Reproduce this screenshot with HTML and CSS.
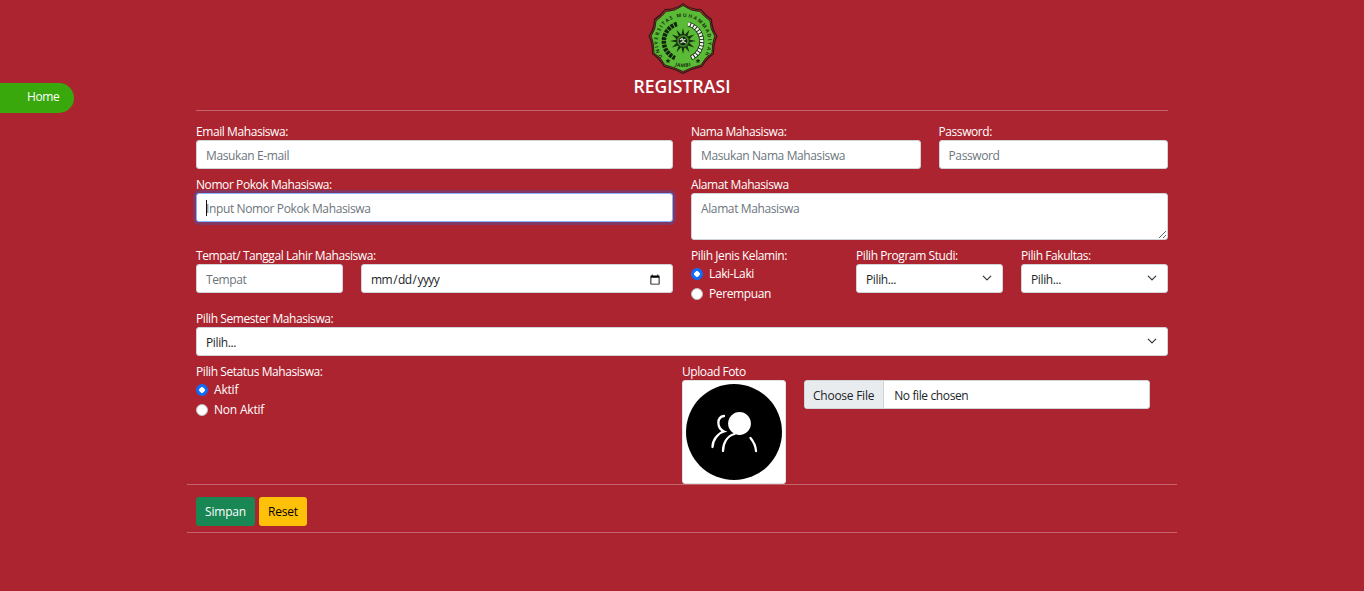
FILE: index.html
```html
<!DOCTYPE html>
<html lang="id">
<head>
<meta charset="utf-8">
<title>Registrasi</title>
<link rel="stylesheet" href="styles.css">
</head>
<body>
<a class="home">Home</a>
<main class="page">
  <header class="header">
    <svg class="logo" viewBox="0 0 70 72">
      <defs>
        <path id="arc" d="M16 55.500 A25.200 25.200 0 1 1 54 55.500"/>
        <path id="arc-low" d="M19 59.500 Q35 68.500 51 59.500"/>
      </defs>
      <path d="M35 0 Q42 6 53 6 Q58 12 64 16 Q64 25 69.500 33 Q66 40 66 51 Q59 56 54 64 Q44 66 35 71 Q26 66 16 64 Q11 56 4 51 Q4 40 .5 33 Q6 25 6 16 Q12 12 17 6 Q28 6 35 0Z" fill="#241a16"/>
      <path d="M35 1.200 Q43 7 52.500 7 Q57 13 63 17 Q63 26 68.300 33 Q65 40 65 50.500 Q58 55 53.500 63 Q44 65 35 69.800 Q26 65 16.500 63 Q12 55 5 50.500 Q5 40 1.700 33 Q7 26 7 17 Q13 13 17.500 7 Q27 7 35 1.200Z" fill="#b01f2d"/>
      <path d="M35 2.500 Q43 8.500 52 8.500 Q56 13.500 62 18 Q62 26 66.800 33 Q64 40 64 50 Q57 54 53 62 Q44 64 35 68.500 Q26 64 17 62 Q13 54 6 50 Q6 40 3.200 33 Q8 26 8 18 Q14 13.500 18 8.500 Q27 8.500 35 2.500Z" fill="#5bbb36" stroke="#172812" stroke-width=".9"/>
      <text class="seal-text"><textPath href="#arc" startOffset="2" textLength="108">UNIVERSITAS MUHAMMADIYAH</textPath></text>
      <text class="seal-text"><textPath href="#arc-low" startOffset="50%" text-anchor="middle">JAMBI</textPath></text>
      <path d="M29 21 A18 18 0 0 0 27 55" fill="none" stroke="#13260f" stroke-width="4.500" stroke-dasharray="3 .8"/>
      <path d="M40 21 A18 18 0 0 1 43 55" fill="none" stroke="#142b10" stroke-width="4.800"/>
      <path d="M40 21 A18 18 0 0 1 43 55" fill="none" stroke="#f2f6ee" stroke-width="3.400" stroke-dasharray="2.200 1"/>
      <path d="M35 25 L36.600 32 L41.500 26.700 L39.300 33.500 L46.300 31.500 L41 36.500 L48 38 L41 39.500 L46.300 44.500 L39.300 42.500 L41.500 49.300 L36.600 44 L35 51 L33.400 44 L28.500 49.300 L30.700 42.500 L23.700 44.500 L29 39.500 L22 38 L29 36.500 L23.700 31.500 L30.700 33.500 L28.500 26.700 L33.400 32Z" fill="#173311"/>
      <circle cx="35" cy="38" r="6.300" fill="#3d8e29" stroke="#13240f" stroke-width=".8"/>
      <circle cx="35" cy="38" r="4.200" fill="#18220f"/>
      <path d="M32 37 L34 35.500 L35 37.500 L37.500 36 M32.500 40 L35 38.500 L38 40" fill="none" stroke="#d9e5d7" stroke-width="1.200"/>
      <path d="M20 55.500 l.8 1.500 1.700.2-1.300 1.200.3 1.700-1.500-.8-1.500.8.3-1.700-1.300-1.200 1.700-.2Z M50 55.500 l.8 1.500 1.700.2-1.300 1.200.3 1.700-1.500-.8-1.500.8.3-1.700-1.300-1.200 1.700-.2Z" fill="#173311"/>
    </svg>
    <h1 class="title">REGISTRASI</h1>
  </header>

  <form class="form">
    <div class="row row-account">
      <div class="field"><label class="label">Email Mahasiswa:</label><input class="control" placeholder="Masukan E-mail"></div>
      <div class="field"><label class="label">Nama Mahasiswa:</label><input class="control" placeholder="Masukan Nama Mahasiswa"></div>
      <div class="field"><label class="label">Password:</label><input class="control" type="password" placeholder="Password"></div>
    </div>
    <div class="row row-half">
      <div class="field active-field"><label class="label">Nomor Pokok Mahasiswa:</label><input class="control control-active" placeholder="Input Nomor Pokok Mahasiswa"><span class="caret"></span></div>
      <div class="field"><label class="label">Alamat Mahasiswa</label><textarea class="control area" placeholder="Alamat Mahasiswa"></textarea></div>
    </div>
    <div class="row row-birth">
      <div class="field birth">
        <label class="label">Tempat/ Tanggal Lahir Mahasiswa:</label>
        <div class="birth-inputs"><input class="control" placeholder="Tempat"><input class="control date" type="date"></div>
      </div>
      <div class="field">
        <span class="label">Pilih Jenis Kelamin:</span>
        <label class="choice"><input class="radio" type="radio" name="gender" checked>Laki-Laki</label>
        <label class="choice"><input class="radio" type="radio" name="gender">Perempuan</label>
      </div>
      <div class="field"><label class="label">Pilih Program Studi:</label>
        <div class="select-box"><select class="control select"><option>Pilih...</option></select><svg class="chevron" viewBox="0 0 16 16"><path d="m2 5 6 6 6-6"/></svg></div></div>
      <div class="field"><label class="label">Pilih Fakultas:</label>
        <div class="select-box"><select class="control select"><option>Pilih...</option></select><svg class="chevron" viewBox="0 0 16 16"><path d="m2 5 6 6 6-6"/></svg></div></div>
    </div>
    <div class="field"><label class="label">Pilih Semester Mahasiswa:</label>
      <div class="select-box"><select class="control select"><option>Pilih...</option></select><svg class="chevron" viewBox="0 0 16 16"><path d="m2 5 6 6 6-6"/></svg></div></div>
    <div class="row row-photo">
      <div class="field">
        <span class="label">Pilih Setatus Mahasiswa:</span>
        <label class="choice"><input class="radio" type="radio" name="status" checked><span class="choice-short">Aktif</span></label>
        <label class="choice"><input class="radio" type="radio" name="status"><span class="choice-short">Non Aktif</span></label>
      </div>
      <div class="field">
        <label class="label">Upload Foto</label>
        <div class="upload">
          <svg class="photo" viewBox="1 1 102 102">
            <circle cx="52" cy="52" r="48"/>
            <circle cx="57.500" cy="43.500" r="11.400" fill="#fff"/>
            <path d="M42 36 C34.500 37 34.500 48 42 51.500 C36 53 30.500 60 30.500 67 M52.500 54 C45 56 41 63 41 71 M68.500 58 Q73.500 64 74 71" fill="none" stroke="#fff" stroke-width="2.300" stroke-linecap="round"/>
          </svg>
          <input class="control file" type="file">
        </div>
      </div>
    </div>
  </form>
  <footer class="actions"><button class="button save">Simpan</button><button class="button reset">Reset</button></footer>
</main>
</body>
</html>
```

FILE: styles.css
```css
* { box-sizing: border-box; }
body { margin: 0; background: #ac242f; color: #fff; font: 12px/18px "Open Sans", "Noto Sans", sans-serif; letter-spacing: -.38px; }
.home { position: absolute; left: 0; top: 83px; width: 74px; height: 30px; padding: 5px 0 0 27px; background: #38a80c; border-radius: 0 15px 15px 0; font-weight: 500; }
.page { width: 990px; margin: 0 auto; padding-top: 3px; }
.header { display: flex; flex-direction: column; align-items: center; height: 108px; margin: 0 9px; border-bottom: 1px solid #c4656d; }
.logo { width: 70px; height: 72px; margin-left: 2px; }
.seal-text { font: bold 5px "Open Sans", sans-serif; letter-spacing: .3px; fill: #173311; }
.title { margin: 0; font-size: 17.500px; line-height: 22px; font-weight: 600; letter-spacing: .1px; }
.form { display: flex; flex-direction: column; gap: 7px; padding: 12px 9px 0; }
.row { display: grid; column-gap: 18px; }
.row-account { grid-template-columns: 477px 1fr 1fr; }
.row-half { grid-template-columns: 1fr 1fr; }
.row-birth { grid-template-columns: 477px repeat(3, 1fr); height: 56px; }
.row-photo { grid-template-columns: 486px 468px; column-gap: 0; height: 121px; }
.field { display: flex; flex-direction: column; min-width: 0; }
.label { display: block; height: 17px; line-height: 18px; white-space: nowrap; font-weight: 500; letter-spacing: -.42px; }
.control { display: block; width: 100%; height: 29px; margin: 0; padding: 3px 9px 1px; border: 1px solid #ced4da; border-radius: 3px; background: #fff; color: #212529; font: inherit; letter-spacing: inherit; outline: 0; }
.control::placeholder { color: #6c757d; opacity: 1; }
.control-active { border-color: #86b7fe; box-shadow: 0 0 0 3px rgba(13, 110, 253, .25); }
.active-field { position: relative; }
.caret { position: absolute; left: 10px; top: 24px; width: 1px; height: 16px; background: #111; }
.date { padding-left: 8px; letter-spacing: -.55px; }
.area { height: 47px; padding-top: 6px; resize: vertical; }
.birth-inputs { display: grid; grid-template-columns: 147px 312px; gap: 18px; }
.choice { display: flex; align-items: center; gap: 6px; height: 20px; font-weight: 500; }
.choice-short { letter-spacing: -.2px; }
.radio { appearance: none; width: 12px; height: 12px; margin: 0 0 1px; border: 1px solid #bfbfbf; border-radius: 50%; background: #fff; }
.radio:checked { border-color: #0d6efd; background: radial-gradient(circle, #fff 0 2.5px, #0d6efd 3px); }
.select-box { position: relative; }
.select { appearance: none; }
.chevron { position: absolute; right: 11px; top: 9px; width: 10px; height: 10px; fill: none; stroke: #343a40; stroke-width: 2; stroke-linecap: round; stroke-linejoin: round; pointer-events: none; }
.upload { display: flex; gap: 18px; }
.photo { flex: none; width: 104px; height: 104px; background: #fff; border: 1px solid #dee2e6; border-radius: 3px; }
.file { padding: 0; line-height: 27px; overflow: hidden; }
.file::file-selector-button { height: 27px; margin: 0 10px 0 0; padding: 1px 9px 0 8px; border: 0; border-right: 1px solid #ced4da; background: #e9ecef; color: #212529; font: inherit; letter-spacing: -.25px; }
.actions { display: flex; gap: 4px; height: 49px; padding: 12px 9px 0; border-top: 1px solid #c4656d; border-bottom: 1px solid #c4656d; }
.button { height: 29px; padding: 1px 0 0; border: 0; border-radius: 3px; font: inherit; letter-spacing: -.2px; }
.save { width: 59px; background: #198754; color: #fff; }
.reset { width: 48px; background: #ffc107; color: #000; }
```
